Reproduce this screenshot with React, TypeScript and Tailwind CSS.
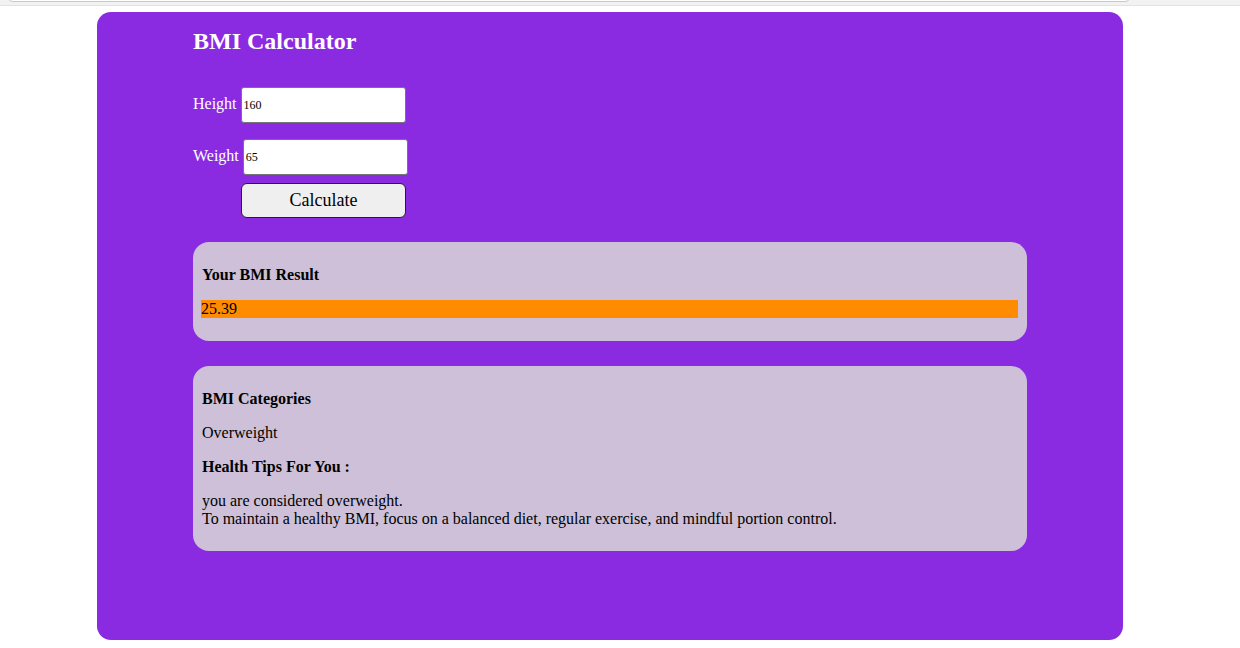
import React from 'react';

export default function App() {
  return (
    <div className="w-[1240px] h-[648px] bg-white font-['Liberation_Serif',serif] text-black overflow-hidden">
      {/* Barra superior do navegador */}
      <div className="h-[6px] bg-[#f2f2f2] border-b border-[#e2e2e2] pl-[7px] overflow-hidden">
        <div className="w-[1124px] h-[20px] -mt-[18px] bg-white border border-[#c9c9c9] rounded-[6px]" />
      </div>

      {/* Cartão principal */}
      <div className="ml-[97px] mt-[6px] w-[1026px] h-[628px] bg-[#8a2be2] rounded-[14px] px-[96px] pt-[15px]">
        <h2 className="text-[24px] leading-[28px] font-bold text-white">BMI Calculator</h2>

        <div className="mt-[32px] flex items-center text-white text-[16px]">
          <label className="mr-[4px] -mt-[2px]">Height</label>
          <input
            defaultValue="160"
            className="w-[165px] h-[36px] bg-white text-black text-[12px] px-[2px] border border-[#767676] rounded-[3px] font-['Liberation_Serif',serif] outline-none"
          />
        </div>

        <div className="mt-[16px] flex items-center text-white text-[16px]">
          <label className="mr-[4px] -mt-[2px]">Weight</label>
          <input
            defaultValue="65"
            className="w-[165px] h-[36px] bg-white text-black text-[12px] px-[2px] border border-[#767676] rounded-[3px] font-['Liberation_Serif',serif] outline-none"
          />
        </div>

        <button className="mt-[8px] ml-[48px] w-[165px] h-[35px] bg-[#efefef] border border-[#222] rounded-[6px] text-[18px] text-black font-['Liberation_Serif',serif]">
          Calculate
        </button>

        {/* Resultado */}
        <div className="mt-[24px] w-[834px] bg-[#cdc0d8] rounded-[16px] px-[8px] pt-[24px] pb-[23px]">
          <h4 className="pl-[1px] text-[16px] leading-[18px] font-bold">Your BMI Result</h4>
          <div className="mt-[16px] h-[18px] bg-[#ff8c00] text-[16px] leading-[18px] w-[817px]">25.39</div>
        </div>

        {/* Categorias */}
        <div className="mt-[25px] w-[834px] bg-[#cdc0d8] rounded-[16px] pl-[9px] pr-[8px] pt-[24px] pb-[23px] text-[16px] leading-[18px]">
          <h4 className="font-bold">BMI Categories</h4>
          <p className="mt-[16px]">Overweight</p>
          <h4 className="mt-[16px] font-bold">Health Tips For You :</h4>
          <p className="mt-[16px]">
            you are considered overweight.
            <br />
            To maintain a healthy BMI, focus on a balanced diet, regular exercise, and mindful portion control.
          </p>
        </div>
      </div>
    </div>
  );
}
